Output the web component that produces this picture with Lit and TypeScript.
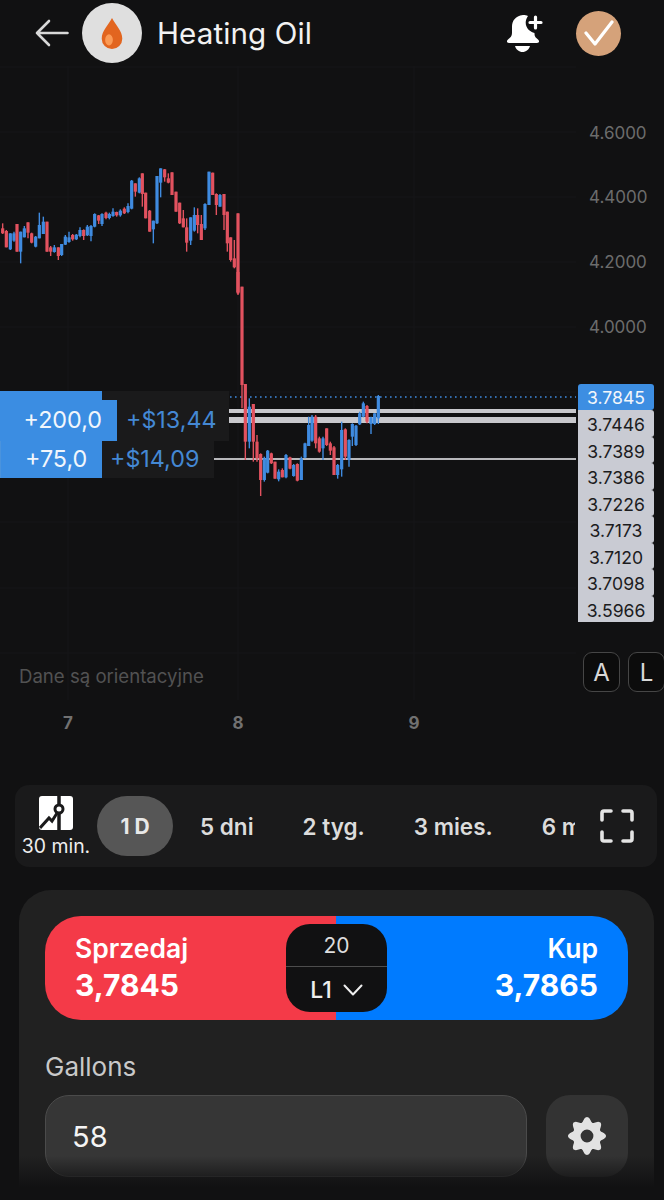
import { LitElement, html, css, svg } from 'lit';
import { customElement } from 'lit/decorators.js';

type Candle = [x: number, high: number, low: number, top: number, bottom: number, up: number];

// left part of the series, read from the chart: x, wick high/low, body top/bottom
const rawLeft: number[][] = [
  [8,220,252,235,250,0],[19,240,292,243,292,0],[31,250,300,250,298,1],[42,245,275,250,272,1],
  [51,222,305,222,305,0],[62,245,340,245,305,1],[73,228,262,235,262,1],[84,217,265,217,248,0],
  [95,248,280,250,278,0],[107,258,292,260,290,1],[118,188,265,225,265,1],[130,200,252,215,252,1],
  [141,215,305,215,305,0],[152,288,318,292,305,0],[163,285,308,292,306,1],[175,292,330,292,318,0],
  [185,282,318,282,315,1],[196,255,285,260,284,1],[207,245,278,262,276,1],[218,252,272,255,268,0],
  [229,252,270,254,268,1],[240,232,262,240,258,1],[251,238,270,240,258,0],[262,225,258,230,256,1],
  [273,225,274,228,258,1],[284,190,232,192,230,1],[296,195,222,196,212,0],[306,190,228,192,222,1],
  [318,185,208,188,204,0],[328,188,208,192,204,1],[339,175,200,185,198,1],[350,185,200,186,196,0],
  [361,178,200,182,196,1],[373,172,192,176,190,0],[384,160,190,168,186,1],[395,90,178,92,176,1],
  [406,100,140,100,125,0],[418,82,130,85,128,1],[427,70,170,70,132,0],[437,128,205,128,205,0],
  [449,180,245,182,245,0],[460,212,280,212,238,1],[471,78,222,78,220,1],[482,55,142,55,98,1],
  [494,57,95,58,82,0],[505,70,100,85,98,0],[516,67,135,67,135,0],[528,125,185,125,185,0],
  [539,158,222,158,220,0],[550,180,232,205,232,0],[560,205,305,232,278,0],[572,202,285,202,272,1],
  [583,172,245,195,242,1],[593,175,250,195,225,0],[604,195,270,222,270,0],[615,160,240,162,235,1],
  [627,65,165,65,165,1],[638,68,135,68,135,0],[649,130,195,132,165,0],[660,132,170,135,170,1],
  [672,132,240,132,195,0],[682,185,305,185,280,0],[692,262,335,262,330,0],[703,270,355,325,352,0],
];

const rawRight: number[][] = [
  [-24,-200,42,-200,40,0],[36,20,385,20,315,0],[46,312,540,312,485,0],[58,355,505,380,485,1],
  [70,372,545,372,485,0],[81,465,545,485,535,0],[92,520,648,522,600,0],[103,530,605,535,600,1],
  [113,510,580,512,578,1],[124,518,552,520,550,0],[135,545,596,545,596,0],[146,568,604,575,598,1],
  [157,565,592,570,592,0],[168,522,595,525,592,1],[180,530,568,532,566,0],[191,552,590,555,588,1],
  [202,550,604,552,602,0],[214,530,600,535,600,1],[225,488,535,490,533,1],[236,410,498,435,498,1],
  [246,405,485,410,482,1],[257,405,505,410,490,0],[268,470,518,475,515,0],[279,470,540,475,505,1],
  [290,445,498,445,495,0],[301,485,525,490,512,0],[312,498,585,502,585,0],[323,552,596,555,585,1],
  [335,425,590,450,568,1],[346,445,540,448,530,0],[357,478,560,480,540,1],[367,430,498,432,470,1],
  [378,435,498,437,495,1],[389,395,435,400,433,1],[400,365,412,370,410,1],[411,375,430,378,425,0],
  [423,410,462,412,432,1],[434,400,435,400,432,1],[445,345,432,348,415,1],
];

const candles: Candle[] = [
  ...rawLeft.map(c => [c[0] / 3, 150 + c[1] / 3, 150 + c[2] / 3, 150 + c[3] / 3, 150 + c[4] / 3, c[5]] as Candle),
  [238, 272, 295, 272, 292, 0],
  ...rawRight.map(c => [230 + Math.abs(c[0]) / 3, 280 + c[1] / 3, 280 + c[2] / 3, 280 + c[3] / 3, 280 + c[4] / 3, c[5]] as Candle),
];

const gridY = [67, 132, 197, 262, 327, 392, 457, 522, 588, 653];
const gridX = [68, 238, 414];
const axisPrices = [
  { label: '4.6000', y: 133 },
  { label: '4.4000', y: 197 },
  { label: '4.2000', y: 262 },
  { label: '4.0000', y: 327 },
];
const orderPrices = ['3.7446', '3.7389', '3.7386', '3.7226', '3.7173', '3.7120', '3.7098', '3.5966'];
const ranges = ['5 dni', '2 tyg.', '3 mies.', '6 mies.'];

// 8 lobed gear as a polar curve
function gearPath(): string {
  let d = '';
  for (let i = 0; i < 160; i++) {
    const a = (i / 160) * Math.PI * 2;
    const r = 16.6 + 2.4 * Math.cos(8 * a);
    d += `${i ? 'L' : 'M'}${(20 + r * Math.sin(a)).toFixed(2)} ${(20 - r * Math.cos(a)).toFixed(2)}`;
  }
  return d + 'Z M20 13.6a6.4 6.4 0 1 0 0 12.8a6.4 6.4 0 1 0 0-12.8Z';
}

@customElement('app-root')
export class AppRoot extends LitElement {
  static styles = css`
    :host {
      display: block;
      width: 664px;
      height: 1200px;
      overflow: hidden;
      position: relative;
      background: #111112;
      color: #fff;
      font-family: Inter, "Noto Sans", sans-serif;
    }
    .header {
      height: 66px;
      display: flex;
      align-items: center;
      padding-left: 35px;
      padding-right: 43px;
      box-sizing: border-box;
    }
    .back { width: 34px; height: 28px; margin-right: 13px; }
    .coin {
      width: 60px;
      height: 60px;
      border-radius: 50%;
      background: #dfdfdf;
      display: flex;
      align-items: center;
      justify-content: center;
      margin-right: 15px;
    }
    .title { font-size: 29.6px; font-weight: 400; color: #f2f2f2; flex: 1; letter-spacing: 0.1px; }
    .bell { width: 40px; height: 40px; margin-right: 30px; }
    .check {
      width: 45px;
      height: 45px;
      border-radius: 50%;
      background: #d5a27a;
      display: flex;
      align-items: center;
      justify-content: center;
    }

    .chart { position: relative; height: 719px; }
    .chart > svg { position: absolute; left: 0; top: 0; }
    .axis {
      position: absolute;
      left: 589px;
      font-size: 17px;
      line-height: 20px;
      color: #6c6c6c;
      transform: translateY(-10px);
    }
    .prices { position: absolute; left: 578px; top: 318px; width: 76px; }
    .price {
      height: 26.44px;
      line-height: 29px;
      text-align: center;
      font-size: 17.6px;
      background: #c9cbd3;
      color: #1c1c1e;
      border-radius: 0 3px 3px 0;
    }
    .price.last { background: #3d8ee2; color: #f2f6fb; border-radius: 3px 3px 3px 0; line-height: 27.5px; }

    .tag { position: absolute; display: flex; font-size: 23.3px; }
    .tag-one { left: 0; top: 325px; height: 50px; }
    .tag-two { left: 0; top: 375px; height: 37px; }
    .tag-qty {
      background: #3b8de2;
      color: #f1f6fc;
      display: flex;
      align-items: center;
      justify-content: flex-end;
      box-sizing: border-box;
    }
    .tag-one .tag-qty { width: 102px; padding: 6px 0 0 0; }
    .tag-two .tag-qty { width: 102px; justify-content: flex-start; padding: 0 0 3px 24px; border-left: 1px solid #4a93dd; }
    .tag-step {
      position: absolute;
      left: 102px;
      top: 9px;
      width: 15px;
      height: 41px;
      background: #3b8de2;
    }
    .tag-pnl {
      background: #1a1a1b;
      color: #4488d4;
      display: flex;
      align-items: center;
      box-sizing: border-box;
    }
    .tag-one .tag-pnl { width: 127px; padding: 6px 0 0 24px; }
    .tag-two .tag-pnl { width: 112px; padding: 0 0 3px 8px; }

    .note { position: absolute; left: 19px; top: 599px; font-size: 18.6px; line-height: 22px; color: #525252; }
    .scale {
      position: absolute;
      top: 586px;
      width: 37px;
      height: 40px;
      box-sizing: border-box;
      border: 1.5px solid #464646;
      border-radius: 9px;
      background: #0c0c0c;
      display: flex;
      align-items: center;
      justify-content: center;
      font-size: 24px;
      color: #d8d8d8;
    }
    .day {
      position: absolute;
      top: 647px;
      font-size: 17px;
      line-height: 20px;
      font-weight: 700;
      color: #717171;
      transform: translateX(-50%);
    }

    .toolbar {
      margin: 0 7px 0 15px;
      height: 82px;
      border-radius: 14px;
      background: #1a1a1b;
      display: flex;
      align-items: center;
      box-sizing: border-box;
    }
    .interval {
      width: 82px;
      display: flex;
      flex-direction: column;
      align-items: center;
      flex: none;
      font-size: 19.4px;
      line-height: 22px;
      color: #eee;
      gap: 5px;
      white-space: nowrap;
    }
    .range-list {
      width: 478px;
      flex: none;
      display: flex;
      align-items: center;
      overflow: hidden;
      font-size: 22.5px;
      font-weight: 600;
      color: #dcdcdc;
      white-space: nowrap;
    }
    .range-active {
      flex: none;
      width: 76px;
      height: 60px;
      border-radius: 30px;
      background: #565656;
      display: flex;
      align-items: center;
      justify-content: center;
      color: #e8e8e8;
      font-size: 21px;
      font-weight: 700;
      margin-right: 27px;
    }
    .range { flex: none; margin-right: 49px; }
    .expand { margin-left: 25px; width: 34px; height: 34px; flex: none; }

    .panel {
      margin: 23px 10px 0 19px;
      height: 330px;
      border-radius: 32px 32px 0 0;
      background: #212121;
      padding: 26px 26px 0 26px;
      box-sizing: border-box;
    }
    .trade {
      height: 104px;
      border-radius: 36px;
      position: relative;
      display: flex;
      overflow: hidden;
      background: linear-gradient(90deg, #f43a48 50%, #007bff 50%);
    }
    .side {
      flex: 1;
      padding: 0 30px;
      display: flex;
      flex-direction: column;
      justify-content: center;
      font-weight: 700;
      gap: 3px;
    }
    .side.right { align-items: flex-end; }
    .side-name { font-size: 26.5px; line-height: 30px; font-weight: 600; }
    .side-price { font-size: 30px; line-height: 38px; }
    .leverage {
      position: absolute;
      left: 241px;
      top: 8px;
      width: 101px;
      height: 88px;
      border-radius: 24px;
      background: #111112;
      display: flex;
      flex-direction: column;
      overflow: hidden;
    }
    .lev-top {
      height: 42px;
      display: flex;
      align-items: center;
      justify-content: center;
      font-size: 21px;
      color: #ddd;
      border-bottom: 1px solid #4d4d4d;
    }
    .lev-bottom {
      flex: 1;
      display: flex;
      align-items: center;
      justify-content: center;
      gap: 11px;
      font-size: 23px;
      font-weight: 500;
      color: #eee;
    }
    .field-label { font-size: 26px; line-height: 30px; color: #c9c9c9; margin-top: 32px; }
    .field-row { display: flex; gap: 19px; margin-top: 13px; }
    .input {
      width: 482px;
      height: 82px;
      box-sizing: border-box;
      border-radius: 24px;
      border: 1.5px solid #4b4b4b;
      background: #363636;
      display: flex;
      align-items: center;
      padding-left: 26px;
      font-size: 29px;
      color: #f4f4f4;
    }
    .gear {
      width: 82px;
      height: 82px;
      border-radius: 24px;
      background: #333;
      display: flex;
      align-items: center;
      justify-content: center;
    }
    .fade {
      position: absolute;
      left: 0;
      right: 0;
      bottom: 0;
      height: 44px;
      background: linear-gradient(180deg, rgba(17, 17, 18, 0) 0%, #111112 72%);
    }
  `;

  renderCandles() {
    return candles.map(([x, high, low, top, bottom, up]) => {
      const color = up ? '#3f8be0' : '#e2525f';
      return svg`
        <line x1=${x} x2=${x} y1=${high} y2=${low} stroke=${color} stroke-width="1.4"></line>
        <rect x=${x - 1.6} y=${top} width="3.2" height=${bottom - top} fill=${color}></rect>`;
    });
  }

  renderChart() {
    return html`
      <svg width="664" height="719" viewBox="0 66 664 719">
        ${gridY.map(y => svg`<line x1="0" x2="576" y1=${y} y2=${y} stroke="#171718"></line>`)}
        ${gridX.map(x => svg`<line x1=${x} x2=${x} y1="66" y2="700" stroke="#171718"></line>`)}
        <line x1="200" x2="576" y1="397" y2="397" stroke="#3f8be0" stroke-width="1.4" stroke-dasharray="1.6 3.4"></line>
        <rect x="229" y="409" width="347" height="4" fill="#c8c8cc"></rect>
        <rect x="229" y="417" width="347" height="6" fill="#c8c8cc"></rect>
        <rect x="214" y="458" width="362" height="2" fill="#b8b8bb"></rect>
        ${this.renderCandles()}
      </svg>`;
  }

  render() {
    return html`
      <div class="header">
        <svg class="back" viewBox="0 0 34 28" fill="none" stroke="#d8d8d8" stroke-width="2.600" stroke-linecap="round" stroke-linejoin="round">
          <path d="M32.500 14H2M14 2L2 14l12 12"></path>
        </svg>
        <div class="coin">
          <svg width="24" height="33" viewBox="0 0 28 38">
            <path d="M14 1C10 9 2 16 2 25a12 12 0 0 0 24 0C26 16 18 9 14 1Z" fill="#e2651f"></path>
            <ellipse cx="10.500" cy="26.500" rx="4.500" ry="6.500" fill="#fb9a55"></ellipse>
          </svg>
        </div>
        <div class="title">Heating Oil</div>
        <svg class="bell" viewBox="0 0 40 40">
          <path d="M17 2C9 3 6 8 6 14v6c0 3-1.500 4.500-4 6.500c-2 1.500-1 3.500 1 3.500H31c2 0 3-2 1-3.500c-2-1.500-3.500-3-3.500-5.500v-1C23 19 16 12 22 3c-1.500-.7-3-1-5-1Z" fill="#fff"></path>
          <path d="M9 33h15c-1 3.500-4 6-7.500 6s-6.500-2.500-7.500-6Z" fill="#fff"></path>
          <path d="M29.500 4v11M24 9.500h11" stroke="#fff" stroke-width="3.200" stroke-linecap="round"></path>
        </svg>
        <div class="check">
          <svg width="30" height="26" viewBox="0 0 30 26" fill="none" stroke="#fff" stroke-width="3.200" stroke-linecap="round" stroke-linejoin="round">
            <path d="M2 13l9 11L28 2"></path>
          </svg>
        </div>
      </div>

      <div class="chart">
        ${this.renderChart()}
        ${axisPrices.map(p => html`<div class="axis" style="top:${p.y - 66}px">${p.label}</div>`)}
        <div class="prices">
          <div class="price last">3.7845</div>
          ${orderPrices.map(p => html`<div class="price">${p}</div>`)}
        </div>
        <div class="tag tag-one">
          <div class="tag-qty">+200,0</div>
          <div class="tag-step"></div>
          <div class="tag-pnl">+$13,44</div>
        </div>
        <div class="tag tag-two">
          <div class="tag-qty">+75,0</div>
          <div class="tag-pnl">+$14,09</div>
        </div>
        <div class="note">Dane są orientacyjne</div>
        <div class="scale" style="left:583px">A</div>
        <div class="scale" style="left:628px">L</div>
        <div class="day" style="left:68px">7</div>
        <div class="day" style="left:238px">8</div>
        <div class="day" style="left:414px">9</div>
      </div>

      <div class="toolbar">
        <div class="interval">
          <svg width="34" height="34" viewBox="0 0 34 34">
            <rect width="34" height="34" rx="3" fill="#fff"></rect>
            <path d="M20 0v10M20 17v17" stroke="#1a1a1b" stroke-width="3.500"></path>
            <path d="M1 32l9-10 3 3 7-11" fill="none" stroke="#1a1a1b" stroke-width="3"></path>
            <circle cx="20" cy="13" r="4" fill="#fff" stroke="#1a1a1b" stroke-width="3"></circle>
          </svg>
          <span>30 min.</span>
        </div>
        <div class="range-list">
          <div class="range-active">1 D</div>
          ${ranges.map(r => html`<div class="range">${r}</div>`)}
        </div>
        <svg class="expand" viewBox="0 0 34 34" fill="none" stroke="#e4e4e4" stroke-width="3.600" stroke-linecap="round" stroke-linejoin="round">
          <path d="M2 11V4a2 2 0 0 1 2-2h7M23 2h7a2 2 0 0 1 2 2v7M32 23v7a2 2 0 0 1-2 2h-7M11 32H4a2 2 0 0 1-2-2v-7"></path>
        </svg>
      </div>

      <div class="panel">
        <div class="trade">
          <div class="side">
            <div class="side-name">Sprzedaj</div>
            <div class="side-price">3,7845</div>
          </div>
          <div class="side right">
            <div class="side-name">Kup</div>
            <div class="side-price">3,7865</div>
          </div>
          <div class="leverage">
            <div class="lev-top">20</div>
            <div class="lev-bottom">
              <span>L1</span>
              <svg width="20" height="12" viewBox="0 0 20 12" fill="none" stroke="#eee" stroke-width="2" stroke-linecap="round" stroke-linejoin="round">
                <path d="M1.500 1.500L10 10.500l8.500-9"></path>
              </svg>
            </div>
          </div>
        </div>
        <div class="field-label">Gallons</div>
        <div class="field-row">
          <div class="input">58</div>
          <div class="gear">
            <svg width="40" height="40" viewBox="0 0 40 40">
              <path d=${gearPath()} fill="#e2e2e2" fill-rule="evenodd"></path>
            </svg>
          </div>
        </div>
      </div>
      <div class="fade"></div>
    `;
  }
}
